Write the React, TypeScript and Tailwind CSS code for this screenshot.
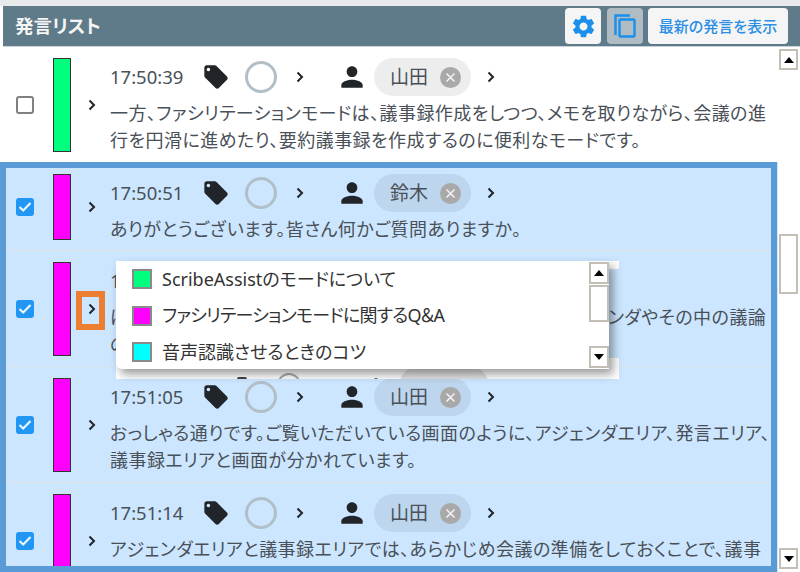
import React from "react";
import { MdLocalOffer, MdPerson, MdSettings } from "react-icons/md";

const Chevron = () => (
  <svg width="8" height="12" viewBox="0 0 8 12" className="shrink-0">
    <path d="M1.5 1.5 L6 6 L1.5 10.5" fill="none" stroke="#212529" strokeWidth="2" />
  </svg>
);

const Check = ({ on }: { on: boolean }) =>
  on ? (
    <div className="w-[18px] h-[18px] rounded-[3px] bg-[#2196f3] flex items-center justify-center">
      <svg width="14" height="12" viewBox="0 0 14 12">
        <path d="M1.5 6 L5.2 9.5 L12.5 2" fill="none" stroke="#eaf6ff" strokeWidth="2.2" />
      </svg>
    </div>
  ) : (
    <div className="w-[18px] h-[18px] rounded-[3px] border-2 border-[#808080] bg-white" />
  );

const Up = () => (
  <svg width="10" height="6" viewBox="0 0 10 6">
    <path d="M5 0 L10 6 L0 6 Z" fill="#000" />
  </svg>
);
const Down = () => (
  <svg width="10" height="6" viewBox="0 0 10 6">
    <path d="M0 0 L10 0 L5 6 Z" fill="#000" />
  </svg>
);

type RowData = { time: string; name: string; color: string; selected: boolean; lines: string[] };

const rows: RowData[] = [
  {
    time: "17:50:39",
    name: "山田",
    color: "bg-[#00ff7f]",
    selected: false,
    lines: [
      "一方、ファシリテーションモードは、議事録作成をしつつ、メモを取りながら、会議の進",
      "行を円滑に進めたり、要約議事録を作成するのに便利なモードです。",
    ],
  },
  {
    time: "17:50:51",
    name: "鈴木",
    color: "bg-[#ff00ff]",
    selected: true,
    lines: ["ありがとうございます。皆さん何かご質問ありますか。"],
  },
  {
    time: "17:50:58",
    name: "山田",
    color: "bg-[#ff00ff]",
    selected: true,
    lines: [
      "はい、ファシリテーションモードでは、画面の左側の議題とアジェンダやその中の議論",
      "の内容を確認できます。",
    ],
  },
  {
    time: "17:51:05",
    name: "山田",
    color: "bg-[#ff00ff]",
    selected: true,
    lines: [
      "おっしゃる通りです。ご覧いただいている画面のように、アジェンダエリア、発言エリア、",
      "議事録エリアと画面が分かれています。",
    ],
  },
  {
    time: "17:51:14",
    name: "山田",
    color: "bg-[#ff00ff]",
    selected: true,
    lines: [
      "アジェンダエリアと議事録エリアでは、あらかじめ会議の準備をしておくことで、議事",
      "録の作成を効率化できます。",
    ],
  },
];

const Row = ({ r }: { r: RowData }) => (
  <div
    className={`flex items-stretch shrink-0 pt-[11px] pb-[10px] border-b border-[#dfe3e6] ${
      r.selected ? "bg-[#cce6ff]" : "bg-white"
    }`}
  >
    <div className="w-[53px] shrink-0 flex items-center pl-4">
      <Check on={r.selected} />
    </div>
    <div className={`w-[18px] shrink-0 border border-[#333] ${r.color}`} />
    <div className="w-[39px] shrink-0 flex items-center pl-[17px]">
      <Chevron />
    </div>
    <div className={`flex-1 min-w-0 ${r.lines.length === 1 ? "h-[66px]" : "h-[94px]"}`}>
      <div className="flex items-center h-[38px]">
        <span className="w-[92px] text-[18.5px] text-[#495057] shrink-0">{r.time}</span>
        <MdLocalOffer size={28} color="#212529" className="shrink-0" />
        <div className="w-[32px] h-[32px] ml-[15px] rounded-full border-[3px] border-[#b3bfc6] shrink-0" />
        <div className="ml-[19px] w-[44px] shrink-0">
          <Chevron />
        </div>
        <MdPerson size={32} color="#212529" className="shrink-0 -ml-[4px]" />
        <div className="ml-[6px] w-[97px] h-[38px] rounded-full bg-black/[0.07] flex items-center pl-4 shrink-0">
          <span className="w-[50px] text-[19px] text-[#495057]">{r.name}</span>
          <span className="w-[21px] h-[21px] rounded-full bg-[#a9a9a9] flex items-center justify-center">
            <svg width="11" height="11" viewBox="0 0 11 11">
              <path d="M1.5 1.5 L9.5 9.5 M9.5 1.5 L1.5 9.5" stroke="#f2f2f2" strokeWidth="1.6" />
            </svg>
          </span>
        </div>
        <div className="ml-[16px]">
          <Chevron />
        </div>
      </div>
      <div className="mt-[4px] text-[18px] tracking-[0.45px] leading-[27px] text-[#495057] whitespace-nowrap">
        {r.lines.map((l) => (
          <div key={l}>{l}</div>
        ))}
      </div>
    </div>
  </div>
);

const ScrollBtn = ({ children, className = "" }: { children: React.ReactNode; className?: string }) => (
  <div className={`border-2 border-[#c4bfb6] bg-white flex items-center justify-center ${className}`}>{children}</div>
);

const PopItem = ({ color, children }: { color: string; children: React.ReactNode }) => (
  <div className="flex items-center h-[36.5px] pl-4">
    <span className={`w-[20px] h-[20px] border-2 border-[#8a8a8a] shrink-0 ${color}`} />
    <span className="ml-[10px] text-[18px] text-[#333] whitespace-nowrap">{children}</span>
  </div>
);

export default function App() {
  return (
    <div className="relative w-[800px] h-[572px] overflow-hidden bg-white font-['Noto_Sans','Noto_Sans_CJK_JP',sans-serif] [font-feature-settings:'palt']">
      <div className="h-[6px] bg-[#e8e9ea]" />
      <div className="ml-[3px] h-[41px] bg-[#5f7a88] border-b border-[#c9d2d7] flex items-center pl-3 pr-3">
        <span className="text-[18.5px] font-bold text-[#f5f5f5]">発言リスト</span>
        <div className="ml-auto flex items-center">
          <div className="w-[36px] h-[36px] rounded-[4px] bg-[#f5f5f5] flex items-center justify-center">
            <MdSettings size={27} color="#1a8fec" />
          </div>
          <div className="ml-[6px] w-[36px] h-[36px] rounded-[4px] bg-[#afbcc4] flex items-center justify-center">
            <svg width="22" height="24" viewBox="0 0 22 24">
              <path d="M1.5 21 V1.5 H16" fill="none" stroke="#1a8fec" strokeWidth="2.4" />
              <rect x="5.5" y="5.5" width="15" height="17" rx="1" fill="none" stroke="#1a8fec" strokeWidth="2.4" />
            </svg>
          </div>
          <div className="ml-[5px] w-[140px] h-[36px] rounded-[4px] bg-[#f5f5f5] flex items-center justify-center text-[15px] font-medium text-[#2b8fe6]">
            最新の発言を表示
          </div>
        </div>
      </div>
      <div className="flex h-[525px]">
        <div className="w-[778px] overflow-hidden flex flex-col">
          {rows.map((r) => (
            <Row key={r.time} r={r} />
          ))}
        </div>
        <div className="w-[22px] flex flex-col items-start pl-px pt-[2px] pb-[3px]">
          <ScrollBtn className="w-[19px] h-[21px]">
            <Up />
          </ScrollBtn>
          <ScrollBtn className="w-[19px] h-[60px] mt-[164px]">{null}</ScrollBtn>
          <ScrollBtn className="w-[19px] h-[21px] mt-auto">
            <Down />
          </ScrollBtn>
        </div>
      </div>

      {/* highlight frame */}
      <div className="absolute left-0 top-[162px] w-[777px] h-[410px] border-[6px] border-[#5b9bd5] pointer-events-none" />

      {/* orange marker */}
      <div className="absolute left-[76px] top-[291px] w-[29px] h-[39px] border-[6px] border-[#ed7d31]" />

      {/* leftovers of the pasted pop-up image */}
      <div className="absolute left-[116px] top-[358px] w-[503px] h-[21px] bg-white overflow-hidden">
        <div className="absolute left-[284px] top-[10px] w-[88px] h-[30px] rounded-full bg-[#e2e2e2]" />
        <div className="absolute left-[161px] top-[15px] w-[24px] h-[24px] rounded-full border-2 border-[#aaa]" />
        <div className="absolute left-[121px] top-[19px] w-[10px] h-[4px] rounded-t-[2px] bg-[#444]" />
        <div className="absolute left-[258px] top-[20px] w-[4px] h-[2px] rounded-t-[2px] bg-[#555]" />
      </div>
      <div className="absolute left-[609px] top-[261px] w-[10px] h-[8px] bg-white" />

      {/* pop-up menu */}
      <div className="absolute left-[116px] top-[261px] w-[493px] h-[108px] bg-white rounded-bl-[6px] shadow-[4px_5px_10px_rgba(0,0,0,0.4)]">
        <div>
          <PopItem color="bg-[#00ff7f]">ScribeAssistのモードについて</PopItem>
          <PopItem color="bg-[#ff00ff]">
            <span className="tracking-[-0.75px]">ファシリテーションモードに関する</span>
            <span className="[font-feature-settings:'normal'] tracking-[-1.5px]">Q＆A</span>
          </PopItem>
          <PopItem color="bg-[#00ffff]">音声認識させるときのコツ</PopItem>
        </div>
        <div className="absolute right-0 top-px bottom-px w-[20px] flex flex-col">
          <ScrollBtn className="h-[22px]">
            <Up />
          </ScrollBtn>
          <ScrollBtn className="h-[37px] mt-px">{null}</ScrollBtn>
          <ScrollBtn className="h-[22px] mt-auto">
            <Down />
          </ScrollBtn>
        </div>
      </div>
    </div>
  );
}
